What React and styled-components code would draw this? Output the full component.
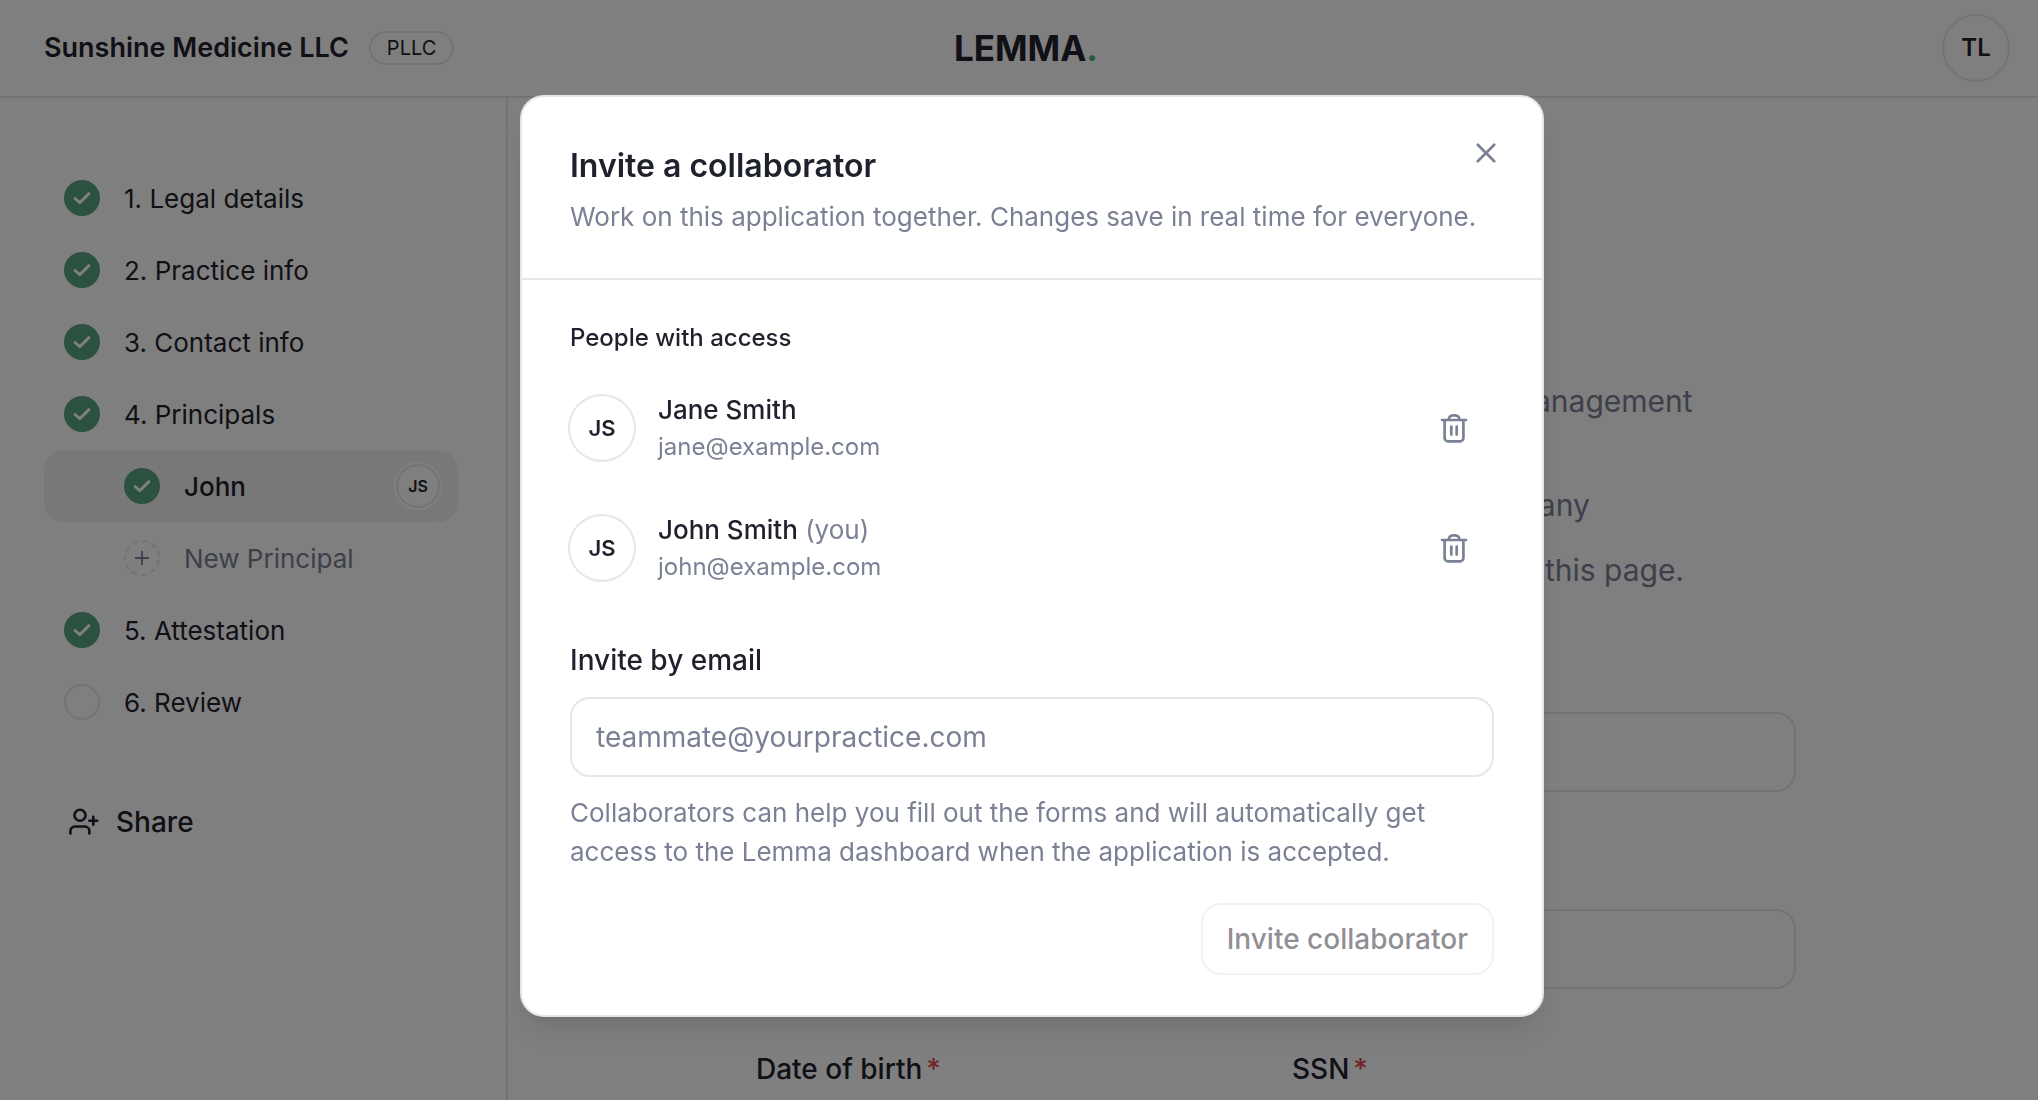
import React from "react";
import styled, { createGlobalStyle, css } from "styled-components";

const ink = "#1f222c";
const muted = "#7b8194";
const line = "#e5e6ea";

const Global = createGlobalStyle`
  *, *::before, *::after { box-sizing: border-box; }
  html, body { height: 100%; margin: 0; overflow: hidden; }
  body {
    background: #fff;
    color: ${ink};
    font-family: Inter, "Noto Sans", sans-serif;
    font-size: 26px;
    line-height: 1.5;
  }
  h1, h2, h3, p, ul { margin: 0; padding: 0; }
  ul { list-style: none; }
  button, input { font: inherit; color: inherit; }
  svg { display: block; flex: none; }
`;

const Page = styled.div`
  height: 100vh;
  display: flex;
  flex-direction: column;
  overflow: hidden;
`;

const Header = styled.header`
  flex: none;
  height: 98px;
  padding: 0 30px 0 44px;
  border-bottom: 2px solid ${line};
  display: grid;
  grid-template-columns: 1fr auto 1fr;
  align-items: center;
`;

const Company = styled.div`
  display: flex;
  align-items: center;
  gap: 20px;
`;

const CompanyName = styled.h1`
  font-size: 27px;
  font-weight: 600;
  line-height: 40px;
`;

const Badge = styled.span`
  height: 34px;
  padding: 0 16px;
  border: 2px solid ${line};
  border-radius: 17px;
  font-size: 20px;
  line-height: 30px;
`;

const Logo = styled.div`
  font-size: 35px;
  font-weight: 700;
  line-height: 48px;
  span { color: #4cb583; }
`;

const avatarSizes = {
  small: css`
    width: 40px;
    height: 40px;
    font-size: 16px;
    box-shadow: 0 0 0 2px ${line}, 0 0 0 4px #fff;
  `,
  medium: css`width: 64px; height: 64px; font-size: 22px;`,
  large: css`width: 64px; height: 64px; font-size: 24px;`,
};

const Avatar = styled.span`
  flex: none;
  display: flex;
  align-items: center;
  justify-content: center;
  border-radius: 50%;
  background: #fff;
  box-shadow: 0 0 0 2px ${line};
  color: ${ink};
  font-weight: 600;
  line-height: 1;
  ${(p) => avatarSizes[p.$size]}
`;

const AccountButton = styled.button`
  justify-self: end;
  padding: 0;
  border: 0;
  border-radius: 50%;
  background: none;
`;

const Body = styled.div`
  flex: 1;
  min-height: 0;
  display: flex;
`;

const Sidebar = styled.aside`
  flex: none;
  width: 508px;
  padding: 64px 48px 0 44px;
  border-right: 2px solid ${line};
`;

const Step = styled.a`
  display: flex;
  align-items: center;
  gap: 24px;
  height: 72px;
  padding: 0 20px 0 ${(p) => (p.$nested ? 80 : 20)}px;
  border-radius: 20px;
  background: ${(p) => (p.$active ? "#f1f1f1" : "none")};
  color: ${(p) => (p.$muted ? muted : ink)};
  font-weight: ${(p) => (p.$active ? 500 : 400)};
  text-decoration: none;
`;

const StepLabel = styled.span`
  flex: 1;
`;

const Marker = styled.span`
  flex: none;
  width: 36px;
  height: 36px;
  border-radius: 50%;
  display: flex;
  align-items: center;
  justify-content: center;
  background: ${(p) => (p.$kind === "done" ? "#56a27f" : "none")};
  border: ${(p) => (p.$kind === "done" ? "0" : p.$kind === "new" ? `2px dashed ${line}` : `2px solid ${line}`)};
  color: ${(p) => (p.$kind === "done" ? "#fff" : muted)};
`;

const ShareButton = styled.button`
  display: flex;
  align-items: center;
  gap: 16px;
  margin-top: 48px;
  padding: 14px 24px;
  border: 0;
  background: none;
  font-size: 28px;
  font-weight: 500;
  line-height: 44px;
`;

const Main = styled.main`
  flex: 1;
  min-width: 0;
  padding: 84px 0 0 6px;
`;

const Content = styled.div`
  max-width: 1040px;
  margin: 0 auto;
`;

const PageTitle = styled.h2`
  font-size: 44px;
  font-weight: 600;
  line-height: 60px;
`;

const Intro = styled.div`
  display: flex;
  flex-direction: column;
  gap: 20px;
  margin-top: 137px;
  color: ${muted};
  font-size: 30px;
  line-height: 45px;
`;

const Lead = styled.p`
  padding-bottom: 39px;
`;

const Form = styled.form`
  display: grid;
  grid-template-columns: 1fr 1fr;
  gap: 60px 32px;
  margin-top: 62px;
`;

const Field = styled.div`
  grid-column: ${(p) => (p.$half ? "auto" : "1 / -1")};
  display: flex;
  flex-direction: column;
  gap: 16px;
`;

const Label = styled.label`
  font-size: 28px;
  font-weight: 500;
  line-height: 41px;
  span { margin-left: 4px; color: #e5484d; }
`;

const Input = styled.input`
  width: 100%;
  height: 80px;
  padding: 0 24px;
  border: 2px solid ${line};
  border-radius: 20px;
  background: none;
  font-size: 28px;
  outline: none;
  &::placeholder { color: ${muted}; opacity: 1; }
`;

const Overlay = styled.div`
  position: fixed;
  inset: 0;
  padding: 12px 0 0 26px;
  display: flex;
  align-items: center;
  justify-content: center;
  background: rgba(0, 0, 0, 0.5);
`;

const Dialog = styled.section`
  position: relative;
  width: 1024px;
  max-width: 100%;
  border: 2px solid ${line};
  border-radius: 24px;
  background: #fff;
  box-shadow: 0 20px 30px -6px rgba(0, 0, 0, 0.1), 0 8px 12px -8px rgba(0, 0, 0, 0.1);
`;

const DialogHeader = styled.div`
  display: flex;
  flex-direction: column;
  gap: 6px;
  padding: 44px 48px 42px;
  border-bottom: 2px solid ${line};
`;

const DialogTitle = styled.h2`
  font-size: 32px;
  font-weight: 600;
  line-height: 50px;
`;

const Text = styled.p`
  color: ${muted};
  font-size: 26px;
  line-height: 39px;
`;

const IconButton = styled.button`
  display: flex;
  padding: 4px;
  border: 0;
  background: none;
  color: ${muted};
`;

const CloseButton = styled(IconButton)`
  position: absolute;
  top: 34px;
  right: 34px;
`;

const DialogBody = styled.div`
  padding: 40px 48px;
`;

const SectionTitle = styled.h3`
  font-size: 24px;
  font-weight: 500;
  line-height: 36px;
`;

const People = styled.ul`
  margin: 12px 0 32px;
`;

const Person = styled.li`
  display: flex;
  align-items: center;
  gap: 24px;
  height: 120px;
  padding-right: 20px;
`;

const PersonInfo = styled.div`
  flex: 1;
`;

const PersonName = styled.p`
  font-size: 26px;
  font-weight: 500;
  line-height: 38px;
  span { color: ${muted}; font-weight: 400; }
`;

const PersonEmail = styled.p`
  color: ${muted};
  font-size: 24px;
  line-height: 36px;
`;

const InviteForm = styled.form`
  display: flex;
  flex-direction: column;
  gap: 16px;
`;

const InviteButton = styled.button`
  align-self: flex-end;
  height: 72px;
  margin-top: 16px;
  padding: 0 24px;
  border: 2px solid ${line};
  border-radius: 20px;
  background: #fff;
  font-size: 28px;
  font-weight: 500;
  opacity: 0.5;
`;

const Icon = ({ size, box = 24, width = 2, children }) => (
  <svg width={size} height={size} viewBox={`0 0 ${box} ${box}`} fill="none" stroke="currentColor"
    strokeWidth={width} strokeLinecap="round" strokeLinejoin="round" aria-hidden="true">
    {children}
  </svg>
);

const CheckIcon = () => <Icon size={22} width={3.2}><path d="M4.500 12.500 9.500 17.200 19.500 7.200" /></Icon>;
const PlusIcon = () => <Icon size={20} width={2.2}><path d="M4.500 12h15M12 4.500v15" /></Icon>;
const CloseIcon = () => <Icon size={36} width={1.8}><path d="M17.500 6.500 6.500 17.500M6.500 6.500l11 11" /></Icon>;
const TrashIcon = () => (
  <Icon size={32} box={32} width={2.7}>
    <path d="M4 8h24M6.600 8v17.900a3.500 3.500 0 0 0 3.500 3.500h11.800a3.500 3.500 0 0 0 3.500-3.500V8M10.800 7.500a4.200 4.200 0 0 1 4.200-4.200h2.200a4.200 4.200 0 0 1 4.200 4.200M13.300 14.600v8M18.700 14.600v8" />
  </Icon>
);
const UserPlusIcon = () => (
  <Icon size={32} box={32} width={2.6}>
    <circle cx="12" cy="9.300" r="5.500" />
    <path d="M2.400 27.500v-2.500a4.500 4.500 0 0 1 4.500-4.500h10a4.500 4.500 0 0 1 4.500 4.500v2.500M21.300 14.700h8M25.300 10.700v8" />
  </Icon>
);

const steps = [
  { label: "1. Legal details", kind: "done" },
  { label: "2. Practice info", kind: "done" },
  { label: "3. Contact info", kind: "done" },
  { label: "4. Principals", kind: "done" },
  { label: "John", kind: "done", nested: true, active: true, initials: "JS" },
  { label: "New Principal", kind: "new", nested: true },
  { label: "5. Attestation", kind: "done" },
  { label: "6. Review", kind: "todo" },
];

const people = [
  { name: "Jane Smith", email: "jane@example.com", initials: "JS" },
  { name: "John Smith", email: "john@example.com", initials: "JS", you: true },
];

const fields = [
  { id: "name", label: "Full legal name" },
  { id: "title", label: "Title" },
  { id: "dob", label: "Date of birth", half: true },
  { id: "ssn", label: "SSN", half: true },
];

export default function App() {
  return (
    <>
      <Global />
      <Page>
        <Header>
          <Company>
            <CompanyName>Sunshine Medicine LLC</CompanyName>
            <Badge>PLLC</Badge>
          </Company>
          <Logo>LEMMA<span>.</span></Logo>
          <AccountButton type="button" aria-label="Account">
            <Avatar $size="large">TL</Avatar>
          </AccountButton>
        </Header>
        <Body>
          <Sidebar>
            <nav>
              {steps.map((s) => (
                <Step key={s.label} href="#" $nested={s.nested} $active={s.active} $muted={s.kind === "new"}>
                  <Marker $kind={s.kind}>
                    {s.kind === "done" && <CheckIcon />}
                    {s.kind === "new" && <PlusIcon />}
                  </Marker>
                  <StepLabel>{s.label}</StepLabel>
                  {s.initials && <Avatar $size="small">{s.initials}</Avatar>}
                </Step>
              ))}
            </nav>
            <ShareButton type="button"><UserPlusIcon />Share</ShareButton>
          </Sidebar>
          <Main>
            <Content>
              <PageTitle>Principals</PageTitle>
              <Intro>
                <Lead>Principals are the owners or officers who share in its management</Lead>
                <p>Add each person who owns part of or directs the company</p>
                <p>You can share the application and let them fill in part of this page.</p>
              </Intro>
              <Form>
                {fields.map((f) => (
                  <Field key={f.id} $half={f.half}>
                    <Label htmlFor={f.id}>{f.label}<span>*</span></Label>
                    <Input id={f.id} />
                  </Field>
                ))}
              </Form>
            </Content>
          </Main>
        </Body>
      </Page>
      <Overlay>
        <Dialog role="dialog" aria-modal="true" aria-labelledby="invite-title">
          <DialogHeader>
            <DialogTitle id="invite-title">Invite a collaborator</DialogTitle>
            <Text>Work on this application together. Changes save in real time for everyone.</Text>
            <CloseButton type="button" aria-label="Close"><CloseIcon /></CloseButton>
          </DialogHeader>
          <DialogBody>
            <SectionTitle>People with access</SectionTitle>
            <People>
              {people.map((p) => (
                <Person key={p.email}>
                  <Avatar $size="medium">{p.initials}</Avatar>
                  <PersonInfo>
                    <PersonName>{p.name}{p.you && <span> (you)</span>}</PersonName>
                    <PersonEmail>{p.email}</PersonEmail>
                  </PersonInfo>
                  <IconButton type="button" aria-label={`Remove ${p.name}`}><TrashIcon /></IconButton>
                </Person>
              ))}
            </People>
            <InviteForm>
              <Label htmlFor="invite-email">Invite by email</Label>
              <Input id="invite-email" type="email" placeholder="teammate@yourpractice.com" />
              <Text>
                Collaborators can help you fill out the forms and will automatically get access to the
                Lemma dashboard when the application is accepted.
              </Text>
              <InviteButton type="submit" disabled>Invite collaborator</InviteButton>
            </InviteForm>
          </DialogBody>
        </Dialog>
      </Overlay>
    </>
  );
}
